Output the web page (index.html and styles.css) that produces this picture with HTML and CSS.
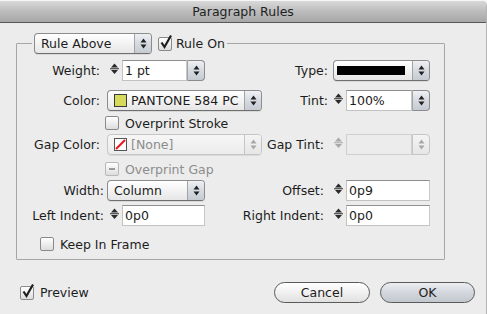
FILE: index.html
```html
<!DOCTYPE html>
<html lang="en">
<head>
  <meta charset="UTF-8">
  <meta name="viewport" content="width=device-width, initial-scale=1.0">
  <title>Paragraph Rules</title>
  <link rel="stylesheet" href="styles.css">
</head>
<body>
  <div class="window">
    <div class="titlebar">Paragraph Rules</div>
    <div class="content">
      <fieldset class="group">
        <legend class="group-head">
          <span class="popup popup-rule">
            <span class="popup-text">Rule Above</span>
            <span class="popup-arrows"><svg width="7" height="11" viewBox="0 0 7 11"><path d="M0.5 4.5 L3.5 0.5 L6.5 4.5Z M0.5 6.5 L3.5 10.5 L6.5 6.5Z" fill="#222"/></svg></span>
          </span>
          <span class="check">
            <span class="box"><svg class="tick" width="14" height="16" viewBox="0 0 14 16"><path d="M2.5 8.5 L5.5 13 L12 1.5" fill="none" stroke="#1e1e1e" stroke-width="2.2"/></svg></span>
            Rule On
          </span>
        </legend>

        <div class="grid">
          <!-- row 1 -->
          <span class="label">Weight:</span>
          <span class="field w98">
            <svg class="stepper" width="15" height="21" viewBox="0 0 15 21"><path d="M4 7.5 L7.5 3.5 L11 7.5Z M4 10 L7.5 14 L11 10Z" fill="#2a2a2a"/><path d="M3 8.75 H12" stroke="#2a2a2a"/></svg>
            <span class="input">1 pt</span>
            <span class="combo-arrows"><svg width="7" height="11" viewBox="0 0 7 11"><path d="M0.5 4.5 L3.5 0.5 L6.5 4.5Z M0.5 6.5 L3.5 10.5 L6.5 6.5Z" fill="#222"/></svg></span>
          </span>
          <span class="label">Type:</span>
          <span class="popup popup-type">
            <span class="popup-text"><span class="line-swatch"></span></span>
            <span class="popup-arrows"><svg width="7" height="11" viewBox="0 0 7 11"><path d="M0.5 4.5 L3.5 0.5 L6.5 4.5Z M0.5 6.5 L3.5 10.5 L6.5 6.5Z" fill="#222"/></svg></span>
          </span>

          <!-- row 2 -->
          <span class="label">Color:</span>
          <span class="popup popup-color">
            <span class="popup-text"><span class="swatch yellow"></span>PANTONE 584 PC</span>
            <span class="popup-arrows"><svg width="7" height="11" viewBox="0 0 7 11"><path d="M0.5 4.5 L3.5 0.5 L6.5 4.5Z M0.5 6.5 L3.5 10.5 L6.5 6.5Z" fill="#222"/></svg></span>
          </span>
          <span class="label">Tint:</span>
          <span class="field w99">
            <svg class="stepper" width="15" height="21" viewBox="0 0 15 21"><path d="M4 7.5 L7.5 3.5 L11 7.5Z M4 10 L7.5 14 L11 10Z" fill="#2a2a2a"/><path d="M3 8.75 H12" stroke="#2a2a2a"/></svg>
            <span class="input">100%</span>
            <span class="combo-arrows"><svg width="7" height="11" viewBox="0 0 7 11"><path d="M0.5 4.5 L3.5 0.5 L6.5 4.5Z M0.5 6.5 L3.5 10.5 L6.5 6.5Z" fill="#222"/></svg></span>
          </span>

          <!-- row 3 -->
          <span class="check span3">
            <span class="box"></span>
            Overprint Stroke
          </span>

          <!-- row 4 -->
          <span class="label">Gap Color:</span>
          <span class="popup popup-color disabled">
            <span class="popup-text"><svg class="swatch-none" width="13" height="13" viewBox="0 0 13 13"><rect x="0.5" y="0.5" width="12" height="12" fill="#fff" stroke="#555"/><path d="M2 11 L11 2" stroke="#e8141b" stroke-width="2"/></svg>[None]</span>
            <span class="popup-arrows"><svg width="7" height="11" viewBox="0 0 7 11"><path d="M0.5 4.5 L3.5 0.5 L6.5 4.5Z M0.5 6.5 L3.5 10.5 L6.5 6.5Z" fill="#a8a8a8"/></svg></span>
          </span>
          <span class="label">Gap Tint:</span>
          <span class="field w99 disabled">
            <svg class="stepper" width="15" height="21" viewBox="0 0 15 21"><path d="M4 7.5 L7.5 3.5 L11 7.5Z M4 10 L7.5 14 L11 10Z" fill="#a8a8a8"/><path d="M3 8.75 H12" stroke="#a8a8a8"/></svg>
            <span class="input"></span>
            <span class="combo-arrows"><svg width="7" height="11" viewBox="0 0 7 11"><path d="M0.5 4.5 L3.5 0.5 L6.5 4.5Z M0.5 6.5 L3.5 10.5 L6.5 6.5Z" fill="#a8a8a8"/></svg></span>
          </span>

          <!-- row 5 -->
          <span class="check span3 disabled">
            <span class="box"><span class="dash"></span></span>
            Overprint Gap
          </span>

          <!-- row 6 -->
          <span class="label">Width:</span>
          <span class="popup popup-width">
            <span class="popup-text">Column</span>
            <span class="popup-arrows"><svg width="7" height="11" viewBox="0 0 7 11"><path d="M0.5 4.5 L3.5 0.5 L6.5 4.5Z M0.5 6.5 L3.5 10.5 L6.5 6.5Z" fill="#222"/></svg></span>
          </span>
          <span class="label">Offset:</span>
          <span class="field w99">
            <svg class="stepper" width="15" height="21" viewBox="0 0 15 21"><path d="M4 7.5 L7.5 3.5 L11 7.5Z M4 10 L7.5 14 L11 10Z" fill="#2a2a2a"/><path d="M3 8.75 H12" stroke="#2a2a2a"/></svg>
            <span class="input">0p9</span>
          </span>

          <!-- row 7 -->
          <span class="label">Left Indent:</span>
          <span class="field w98">
            <svg class="stepper" width="15" height="21" viewBox="0 0 15 21"><path d="M4 7.5 L7.5 3.5 L11 7.5Z M4 10 L7.5 14 L11 10Z" fill="#2a2a2a"/><path d="M3 8.75 H12" stroke="#2a2a2a"/></svg>
            <span class="input">0p0</span>
          </span>
          <span class="label">Right Indent:</span>
          <span class="field w99">
            <svg class="stepper" width="15" height="21" viewBox="0 0 15 21"><path d="M4 7.5 L7.5 3.5 L11 7.5Z M4 10 L7.5 14 L11 10Z" fill="#2a2a2a"/><path d="M3 8.75 H12" stroke="#2a2a2a"/></svg>
            <span class="input">0p0</span>
          </span>
        </div>

        <span class="check keep">
          <span class="box"></span>
          Keep In Frame
        </span>
      </fieldset>

      <div class="footer">
        <span class="check">
          <span class="box"><svg class="tick" width="14" height="16" viewBox="0 0 14 16"><path d="M2.5 8.5 L5.5 13 L12 1.5" fill="none" stroke="#1e1e1e" stroke-width="2.2"/></svg></span>
          Preview
        </span>
        <div class="buttons">
          <button class="btn">Cancel</button>
          <button class="btn btn-ok">OK</button>
        </div>
      </div>
    </div>
  </div>
</body>
</html>
```

FILE: styles.css
```css
body {
  margin: 0;
  padding: 0;
  background-color: #f6f6f6;
  font-family: "DejaVu Sans", Verdana, sans-serif;
  font-size: 12.5px;
  color: #1c1c1c;
}
.window {
  width: 486px;
  height: 313px;
  margin-top: 1px;
  background-color: #ececec;
  border-top-right-radius: 5px;
  box-shadow: 1px 0 0 #b4b4b4;
  overflow: hidden;
}
.titlebar {
  height: 21px;
  line-height: 22px;
  text-align: center;
  color: #1e1e1e;
  background: linear-gradient(#d9d9d9, #bcbcbc 50%, #a7a7a7);
  border-bottom: 1px solid #585858;
}
.content {
  padding: 10px 0 0 16px;
}

/* group box */
.group {
  width: 427px;
  margin: 0;
  padding: 6px 0 8px 0;
  border: 1px solid #a6a6a6;
  border-radius: 1px;
}
.group-head {
  display: flex;
  align-items: center;
  margin-left: 15px;
  padding: 0 2px;
}
.grid {
  display: grid;
  grid-template-columns: 90px 155px 69px 99px;
  grid-template-rows: 30px 26px 18px 28px 18px 25px 21px;
  align-items: start;
}
.label {
  display: flex;
  justify-content: flex-end;
  align-items: center;
  height: 21px;
  padding-right: 7px;
  white-space: nowrap;
}
.grid .label:nth-child(4n+3) {
  padding-right: 3px;
}
.span3 {
  grid-column: 2 / 5;
  margin-left: -2px;
}

/* popup menus */
.popup {
  display: flex;
  height: 19px;
  border: 1px solid #8c8c8c;
  border-bottom-color: #6f6f6f;
  border-radius: 4px;
  background: linear-gradient(#ffffff, #f3f3f3 50%, #e6e6e6);
  box-shadow: 0 1px 0 rgba(0, 0, 0, 0.08);
  overflow: hidden;
}
.popup-text {
  flex: 1;
  display: flex;
  align-items: center;
  padding-left: 6px;
  white-space: nowrap;
  overflow: hidden;
}
.popup-arrows, .combo-arrows {
  width: 16px;
  display: flex;
  align-items: center;
  justify-content: center;
  border-left: 1px solid #a3a3a3;
  background: linear-gradient(#eef0f4, #d6dae1 50%, #c6cbd3);
}
.popup-rule {
  width: 116px;
}
.popup-type {
  width: 95px;
  margin-left: 2px;
}
.popup-type .popup-text {
  padding-left: 3px;
}
.popup-color {
  width: 153px;
}
.popup-width {
  width: 96px;
}
.line-swatch {
  width: 68px;
  height: 9px;
  background-color: #000;
}
.swatch {
  width: 11px;
  height: 11px;
  margin-right: 4px;
  border: 1px solid #3a3a3a;
}
.yellow {
  background-color: #d7d95a;
}
.swatch-none {
  margin-right: 4px;
}

/* stepper fields */
.field {
  display: flex;
  height: 21px;
}
.w98 {
  width: 98px;
}
.w99 {
  width: 99px;
}
.stepper {
  flex: none;
}
.input {
  flex: 1;
  height: 19px;
  line-height: 20px;
  padding-left: 2px;
  background-color: #fff;
  border: 1px solid #c2c2c2;
  border-top-color: #8e8e8e;
  border-right-color: #c8c8c8;
}
.combo-arrows {
  height: 19px;
  border: 1px solid #8c8c8c;
  border-left-color: #a3a3a3;
  border-radius: 0 4px 4px 0;
}

/* checkboxes */
.check {
  display: flex;
  align-items: center;
  gap: 6px;
  height: 14px;
  white-space: nowrap;
}
.group-head .check {
  margin-left: 6px;
  gap: 4px;
}
.box {
  position: relative;
  width: 12px;
  height: 12px;
  border: 1px solid #8a8a8a;
  border-radius: 2px;
  background: linear-gradient(#ffffff, #eeeeee 50%, #dcdcdc);
}
.tick {
  position: absolute;
  left: 0;
  top: -4px;
}
.dash {
  position: absolute;
  left: 3px;
  top: 5px;
  width: 6px;
  height: 2px;
  background-color: #9a9a9a;
}
.disabled {
  color: #8c8c8c;
}
.disabled .box {
  border-color: #b8b8b8;
}
.popup.disabled {
  border-color: #c6c6c6;
  background: linear-gradient(#f6f6f6, #ececec);
}
.popup.disabled .popup-arrows,
.field.disabled .combo-arrows {
  border-color: #c6c6c6;
  background: linear-gradient(#f4f4f4, #e6e6e6);
}
.field.disabled .input {
  background-color: #ececec;
  border-color: #cfcfcf;
}
.keep {
  margin: 11px 0 0 23px;
}

/* footer */
.footer {
  display: flex;
  align-items: center;
  justify-content: space-between;
  margin-top: 22px;
  padding-left: 4px;
  width: 455px;
}
.buttons {
  display: flex;
  gap: 10px;
}
.btn {
  width: 96px;
  height: 21px;
  padding: 0;
  font-family: inherit;
  font-size: 12.5px;
  color: #1c1c1c;
  border: 1px solid #5a5a5a;
  border-radius: 11px;
  background: linear-gradient(#ffffff, #f1f1f1 50%, #e0e0e0);
}
.btn-ok {
  width: 95px;
  background: linear-gradient(#eceef1, #d3d7dd 50%, #c3c8cf);
}
```
